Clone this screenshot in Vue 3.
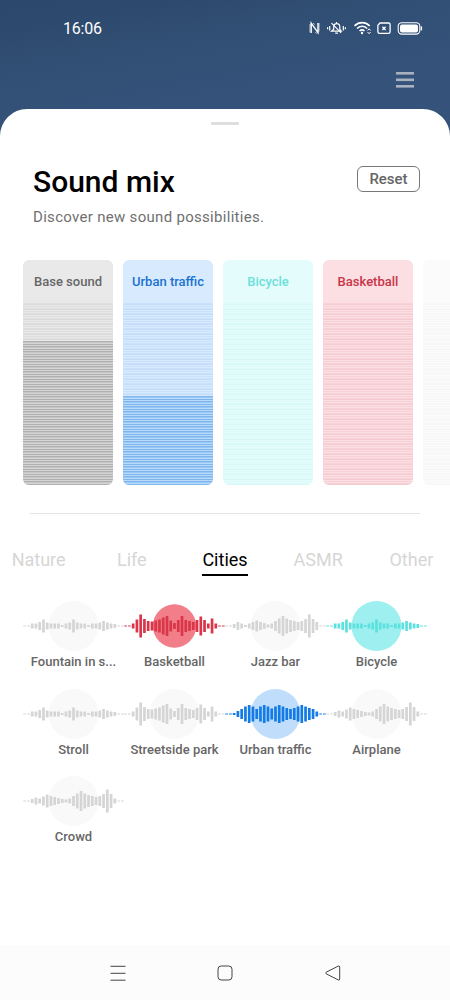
<template>
  <div class="screen">
    <header class="status-bar">
      <span class="clock">16:06</span>
      <svg class="status-icons" width="116" height="16" viewBox="0 0 116 16" fill="none" stroke="#fff">
        <!-- nfc -->
        <path d="M2.2 13V3.2L9 12.6V3" stroke-width="1.4" />
        <path d="M1 4v8.5M4.2 3l1.4 1.6M6.4 12l1.6 1.8M10 3v8.5" stroke-width=".7" />
        <!-- muted bell -->
        <path d="M22.5 11.2h9.8l-1.5-2V7c0-2-1.3-3.3-3-3.3-1.9 0-3.1 1.3-3.1 3.3v2.2zM27.5 2v1.5M26.2 13.2h2.7" stroke-width="1.2" />
        <path d="M22.5 3.2l9.6 9.6M20.7 6v4.5M18.6 7.2v2M34.3 6v4.5M36.4 7.2v2" stroke-width="1.2" />
        <!-- wifi -->
        <path d="M45.5 5.8c4.5-4.2 10.7-4.2 15.2 0M48 8.5c3.2-2.8 7-2.8 10.2 0M50.6 11c1.5-1.4 3.4-1.4 4.9 0" stroke-width="1.6" />
        <circle cx="53" cy="13" r="1.2" fill="#fff" stroke="none" />
        <path d="M58.6 10.5l1.5-1.7 1.5 1.7M58.6 12l1.5 1.7 1.5-1.7" stroke-width="1" />
        <!-- sim -->
        <path d="M71 3h8.5q1.6 0 1.6 1.6v7.2q0 1.6-1.6 1.6h-9q-1.6 0-1.6-1.6V5.2z" stroke-width="1.3" />
        <path d="M73.4 6.8l3.2 3.2M76.6 6.8L73.4 10" stroke-width="1.3" />
        <!-- battery -->
        <rect x="89.2" y="2.7" width="21.6" height="11.4" rx="3.6" stroke-width="1.1" />
        <rect x="91" y="4.4" width="18" height="8" rx="2" fill="#fff" stroke="none" />
        <path d="M112.4 6.4v4" stroke-width="1.4" />
      </svg>
    </header>

    <div class="toolbar">
      <svg width="18" height="16" viewBox="0 0 18 16" fill="#a9b1be">
        <rect width="18" height="2.6" y="0" />
        <rect width="18" height="2.6" y="6.5" />
        <rect width="18" height="2.6" y="13" />
      </svg>
    </div>

    <main class="sheet">
      <div class="handle"></div>

      <section class="intro">
        <div>
          <h1>Sound mix</h1>
          <p>Discover new sound possibilities.</p>
        </div>
        <button class="reset" @click="resetLevels">Reset</button>
      </section>

      <section class="mixer">
        <div v-for="(track, i) in tracks" :key="i" class="track" :class="track.theme">
          <div class="track-name">{{ track.name }}</div>
          <div class="track-body">
            <div class="track-level" :style="{ height: track.level + 'px' }"></div>
          </div>
        </div>
      </section>

      <hr class="divider" />

      <nav class="tabs">
        <button
          v-for="tab in tabs"
          :key="tab"
          :class="{ active: tab === activeTab }"
          @click="activeTab = tab"
        >
          <span>{{ tab }}</span>
        </button>
      </nav>

      <section class="sounds">
        <div v-for="sound in sounds" :key="sound.name" class="sound" :class="sound.theme">
          <svg width="101" height="52" viewBox="0 0 101 52">
            <circle class="disc" cx="50.5" cy="26" :r="sound.radius || 25" />
            <rect
              v-for="(h, i) in waves[sound.wave]"
              :key="i"
              class="bar"
              :x="i * 3.757 + 0.3"
              :y="26 - h / 2"
              :width="2.7"
              :height="h"
            />
          </svg>
          <span>{{ sound.name }}</span>
        </div>
      </section>
    </main>

    <footer class="nav-bar">
      <svg width="16" height="16" viewBox="0 0 16 16" fill="none" stroke="#444">
        <path d="M.5 1.3h15M.5 8.3h15M.5 15.2h15" />
      </svg>
      <svg width="16" height="16" viewBox="0 0 16 16" fill="none" stroke="#444">
        <rect x="1" y="1" width="14" height="14" rx="3.2" />
      </svg>
      <svg width="16" height="16" viewBox="0 0 16 16" fill="none" stroke="#444">
        <path d="M1.2 7.2L13.2 1.1q1.5-.5 1.5 1v12q0 1.4-1.5.8L1.2 8.8q-.9-.8 0-1.6z" />
      </svg>
    </footer>
  </div>
</template>

<script setup>
import { ref } from 'vue';

const tabs = ['Nature', 'Life', 'Cities', 'ASMR', 'Other'];
const activeTab = ref('Cities');

// level is the filled height of the track in px
const tracks = ref([
  { name: 'Base sound', theme: 'grey', level: 144 },
  { name: 'Urban traffic', theme: 'blue', level: 89 },
  { name: 'Bicycle', theme: 'cyan', level: 0 },
  { name: 'Basketball', theme: 'red', level: 0 },
  { name: '', theme: 'empty', level: 0 },
]);

const waves = {
  calm: [1, 1, 5, 5, 8, 13, 7, 5, 5, 5, 2, 5, 7, 13, 7, 5, 5, 2, 5, 5, 7, 10, 7, 5, 4, 1, 1],
  lively: [1, 1, 5, 13, 23, 14, 10, 9, 11, 13, 17, 20, 11, 6, 12, 20, 12, 10, 8, 12, 19, 12, 5, 15, 5, 1, 1],
  jazz: [1, 1, 4, 8, 5, 2, 5, 8, 11, 8, 6, 3, 5, 10, 15, 20, 15, 12, 10, 8, 10, 14, 23, 14, 8, 1, 1],
  dense: [1, 1, 2, 6, 10, 15, 18, 15, 10, 15, 18, 15, 11, 15, 18, 15, 12, 10, 12, 15, 18, 15, 12, 10, 5, 1, 1],
  swell: [1, 1, 4, 7, 5, 9, 13, 10, 8, 6, 4, 3, 5, 10, 15, 20, 15, 12, 10, 8, 10, 14, 23, 14, 5, 1, 1],
};

const sounds = [
  { name: 'Fountain in s...', wave: 'calm' },
  { name: 'Basketball', wave: 'lively', theme: 'red', radius: 21.7 },
  { name: 'Jazz bar', wave: 'jazz' },
  { name: 'Bicycle', wave: 'calm', theme: 'cyan' },
  { name: 'Stroll', wave: 'calm' },
  { name: 'Streetside park', wave: 'lively' },
  { name: 'Urban traffic', wave: 'dense', theme: 'blue' },
  { name: 'Airplane', wave: 'swell' },
  { name: 'Crowd', wave: 'swell' },
];

function resetLevels() {
  tracks.value.forEach((track) => {
    track.level = 0;
  });
}
</script>

<style>
body {
  margin: 0;
}
</style>

<style scoped>
.screen {
  width: 450px;
  height: 1000px;
  display: flex;
  flex-direction: column;
  overflow: hidden;
  box-sizing: border-box;
  font-family: Roboto, "Liberation Sans", sans-serif;
  background: linear-gradient(170deg, #2b476b 0, #304d72 60px, #35527a 130px);
}

button {
  font-family: inherit;
  background: none;
  border: none;
  padding: 0;
}

.status-bar {
  height: 56px;
  padding: 0 31px 0 63px;
  display: flex;
  flex: none;
  align-items: center;
  justify-content: space-between;
  padding-right: 26px;
}

.clock {
  color: #fff;
  font-size: 16px;
  letter-spacing: -0.2px;
}

.status-icons {
  margin-right: -1px;
}

.toolbar {
  height: 53px;
  padding: 16px 36px 0 0;
  box-sizing: border-box;
  flex: none;
  text-align: right;
}

.toolbar svg {
  display: block;
  margin-left: auto;
}

.sheet {
  flex: 1;
  background: #fff;
  border-radius: 27px 27px 0 0;
  overflow: hidden;
}

.handle {
  width: 28px;
  height: 3px;
  margin: 13px auto 0;
  border-radius: 1px;
  background: #dedede;
}

.intro {
  height: 135px;
  padding: 37px 30px 0 33px;
  box-sizing: border-box;
  display: flex;
  justify-content: space-between;
}

.intro h1 {
  margin: 0;
  font-size: 30px;
  line-height: 40px;
  font-weight: 500;
  color: #000;
}

.intro p {
  margin: 5px 0 0;
  font-size: 15px;
  line-height: 20px;
  letter-spacing: 0.3px;
  color: #707070;
}

.reset {
  width: 63px;
  height: 26px;
  margin-top: 4px;
  border: 1px solid #777;
  border-radius: 6px;
  font-size: 15px;
  font-weight: 500;
  color: #666;
}

.mixer {
  display: flex;
  gap: 10px;
  padding-left: 23px;
}

.track {
  width: 90px;
  height: 225px;
  flex: none;
  border-radius: 6px;
  overflow: hidden;
  display: flex;
  flex-direction: column;
}

.track-name {
  height: 43px;
  line-height: 44px;
  text-align: center;
  font-size: 13px;
  font-weight: 500;
  white-space: nowrap;
  color: var(--text);
  background: var(--head);
}

.track-body {
  flex: 1;
  display: flex;
  flex-direction: column;
  justify-content: flex-end;
  background: repeating-linear-gradient(var(--body) 0 1px, var(--line) 1px 2px, var(--head) 2px 3px, var(--body) 3px 4px, var(--head) 4px 5px);
}

.track-level {
  background: repeating-linear-gradient(var(--dark) 0 1px, var(--mid) 1px 2px, var(--light) 2px 3px, var(--dark) 3px 4px, var(--light) 4px 5px);
}

.track.grey {
  --text: #666;
  --head: #e9e9e9;
  --body: #dedede;
  --line: #dadada;
  --dark: #b0b0b0;
  --mid: #c6c6c6;
  --light: #d5d5d5;
}

.track.blue {
  --text: #1a73d0;
  --head: #d8eafe;
  --body: #c9e1fc;
  --line: #c5dcf6;
  --dark: #7fb5ea;
  --mid: #98c8f8;
  --light: #b8dafb;
}

.track.cyan {
  --text: #6ce0dc;
  --head: #e4fcfb;
  --body: #dcfbfa;
  --line: #d8f8f7;
}

.track.red {
  --text: #c93448;
  --head: #fbdfe2;
  --body: #f8d1d6;
  --line: #f4cbd0;
}

.track.empty {
  --head: #fbfbfb;
  --body: #f8f8f8;
  --line: #f7f7f7;
}

.divider {
  height: 1px;
  margin: 28px 30px 0;
  border: none;
  background: #e4e4e4;
}

.tabs {
  display: flex;
  margin: 30px -8px 0;
}

.tabs button {
  flex: 1 0 0;
  height: 32px;
  font-size: 18px;
  color: #d6d6d6;
}

.tabs span {
  display: inline-block;
  height: 29px;
  line-height: 30px;
  border-bottom: 2px solid transparent;
}

.tabs .active {
  color: #000;
}

.tabs .active span {
  border-color: #000;
}

.sounds {
  display: grid;
  grid-template-columns: repeat(4, 101px);
  grid-auto-rows: 87.5px;
  padding: 24px 0 0 23px;
}

.sound {
  --disc: #f9f9f9;
  --bar: #d5d5d5;
  display: flex;
  flex-direction: column;
  align-items: center;
  font-size: 13px;
  line-height: 20px;
  font-weight: 500;
  color: #666;
}

.sound.red {
  --disc: #f27e89;
  --bar: #d9364a;
}

.sound.cyan {
  --disc: #9df0ef;
  --bar: #5ce1de;
}

.sound.blue {
  --disc: #c0defc;
  --bar: #147be4;
}

.disc {
  fill: var(--disc);
}

.bar {
  fill: var(--bar);
}

.nav-bar {
  height: 55px;
  flex: none;
  display: flex;
  align-items: center;
  justify-content: center;
  gap: 91.5px;
  background: #fcfcfc;
}
</style>
